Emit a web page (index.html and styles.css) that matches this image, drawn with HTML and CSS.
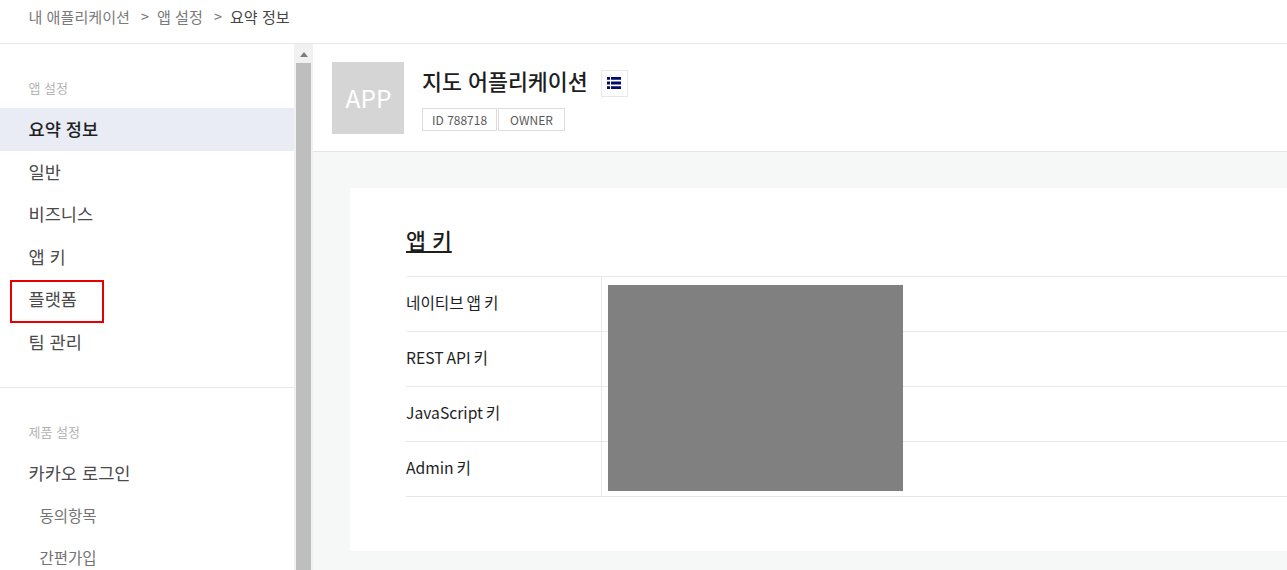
FILE: index.html
```html
<!DOCTYPE html>
<html lang="ko">
<head>
<meta charset="utf-8">
<title>요약 정보</title>
<link rel="stylesheet" href="styles.css">
</head>
<body>
<nav class="crumbs">
  <span>내 애플리케이션</span><span class="sep">&gt;</span><span>앱 설정</span><span class="sep">&gt;</span><span class="cur">요약 정보</span>
</nav>
<div class="layout">
  <aside class="side">
    <div class="menu">
      <section class="group">
        <h2 class="glabel">앱 설정</h2>
        <a class="item active">요약 정보</a>
        <a class="item">일반</a>
        <a class="item">비즈니스</a>
        <a class="item">앱 키</a>
        <a class="item">플랫폼</a>
        <a class="item">팀 관리</a>
      </section>
      <section class="group last">
        <h2 class="glabel">제품 설정</h2>
        <a class="item">카카오 로그인</a>
        <a class="sub">동의항목</a>
        <a class="sub">간편가입</a>
      </section>
      <div class="mark"></div>
    </div>
    <div class="scroll">
      <div class="arrow"></div>
      <div class="thumb"></div>
    </div>
  </aside>
  <main class="main">
    <header class="apphead">
      <div class="logo">APP</div>
      <div class="appinfo">
        <div class="titlerow">
          <h1 class="title">지도 어플리케이션</h1>
          <span class="listbtn">
            <svg width="14" height="12" viewBox="0 0 14 12"><path d="M0 0h3v2.7H0zM4 0h10v2.7H4zM0 4.6h3v2.8H0zM4 4.6h10v2.8H4zM0 9.3h3V12H0zM4 9.3h10V12H4z" fill="#000a6e"/></svg>
          </span>
        </div>
        <div class="tags"><span class="tag id">ID 788718</span><span class="tag owner">OWNER</span></div>
      </div>
    </header>
    <div class="content">
      <section class="card">
        <h2 class="cardtitle">앱 키</h2>
        <div class="table">
          <div class="row"><div class="key">네이티브 앱 키</div><div class="val"></div></div>
          <div class="row"><div class="key">REST API 키</div><div class="val"></div></div>
          <div class="row"><div class="key">JavaScript 키</div><div class="val"></div></div>
          <div class="row"><div class="key">Admin 키</div><div class="val"></div></div>
          <div class="redact"></div>
        </div>
      </section>
    </div>
  </main>
</div>
</body>
</html>
```

FILE: styles.css
```css
* { box-sizing: border-box; }
html, body { margin: 0; height: 570px; overflow: hidden; background: #fff; }
body { font-family: "Noto Sans CJK KR", "Noto Sans", sans-serif; color: #1e1e1e; }
.crumbs { height: 44px; border-bottom: 1px solid #e8e8e8; padding: 6px 0 0 28.5px; font-size: 15.1px; line-height: 20px; color: #7a7a7a; display: flex; }
.crumbs .sep { margin: 0 8px 0 11px; font-size: 14.5px; }
.crumbs .cur { color: #444; }
.layout { display: flex; height: 526px; }
.side { width: 313px; flex: none; display: flex; }
.menu { width: 294px; flex: none; position: relative; }
.group { padding-top: 34px; border-bottom: 1px solid #e8e8e8; padding-bottom: 23px; }
.group.last { border-bottom: 0; }
.glabel { margin: 0 0 10px 28.5px; font-size: 13px; line-height: 20px; font-weight: 400; color: #b4b4b4; }
.item { display: block; height: 42.6px; line-height: 42px; padding-left: 28.5px; font-size: 17.6px; color: #4a4a4a; }
.item.active { background: #e9ecf5; color: #1e1e1e; font-weight: 500; }
.sub { display: block; height: 41.6px; line-height: 42px; padding-left: 39.5px; font-size: 15.5px; color: #737373; }
.mark { position: absolute; left: 10px; top: 236px; width: 94px; height: 43px; border: 2px solid #e60000; }
.scroll { width: 19px; flex: none; background: #f1f1f1; padding: 0 2px; }
.arrow { width: 0; height: 0; margin: 8px auto 6px; border: 4px solid transparent; border-top: 0; border-bottom: 5px solid #7d7d7d; }
.thumb { height: 510px; background: #bebebe; }
.main { flex: 1; min-width: 0; background: #f6f8f8; }
.apphead { height: 108px; background: #fff; border-bottom: 1px solid #e4e4e4; padding: 18px 0 0 19px; display: flex; }
.logo { width: 72px; height: 72px; padding-left: 1px; background: #d5d5d5; color: #fff; font-size: 24.5px; line-height: 72px; text-align: center; }
.appinfo { margin-left: 18px; }
.titlerow { display: flex; align-items: center; height: 40px; }
.title { margin: 0; font-size: 21.7px; line-height: 40px; font-weight: 500; color: #1e1e1e; position: relative; top: -1px; }
.listbtn { margin-left: 13px; width: 27px; height: 27px; border: 1px solid #e8e8e8; background: #fff; display: flex; align-items: center; justify-content: center; position: relative; top: 1px; }
.tags { display: flex; gap: 1px; margin-top: 6px; }
.tag { height: 23px; border: 1px solid #dcdcdc; font-size: 12px; line-height: 22px; color: #5a5a5a; background: #fff; }
.tag.id { padding: 0 9px; }
.tag.owner { padding: 0 11px; }
.content { padding: 36px 0 0 37px; }
.card { background: #fff; height: 363px; padding: 33px 0 0 56px; }
.cardtitle { margin: 0 0 18px; font-size: 21.6px; line-height: 37px; font-weight: 500; text-decoration: underline; color: #1e1e1e; }
.table { position: relative; border-top: 1px solid #e8e8e8; }
.row { height: 55px; border-bottom: 1px solid #e8e8e8; display: flex; }
.key { width: 195px; line-height: 52px; font-size: 15.7px; word-spacing: -1.5px; font-weight: 400; color: #1e1e1e; border-right: 1px solid #e8e8e8; box-sizing: content-box; }
.val { flex: 1; }
.redact { position: absolute; left: 202px; top: 8px; width: 295px; height: 206px; background: #808080; }
```
